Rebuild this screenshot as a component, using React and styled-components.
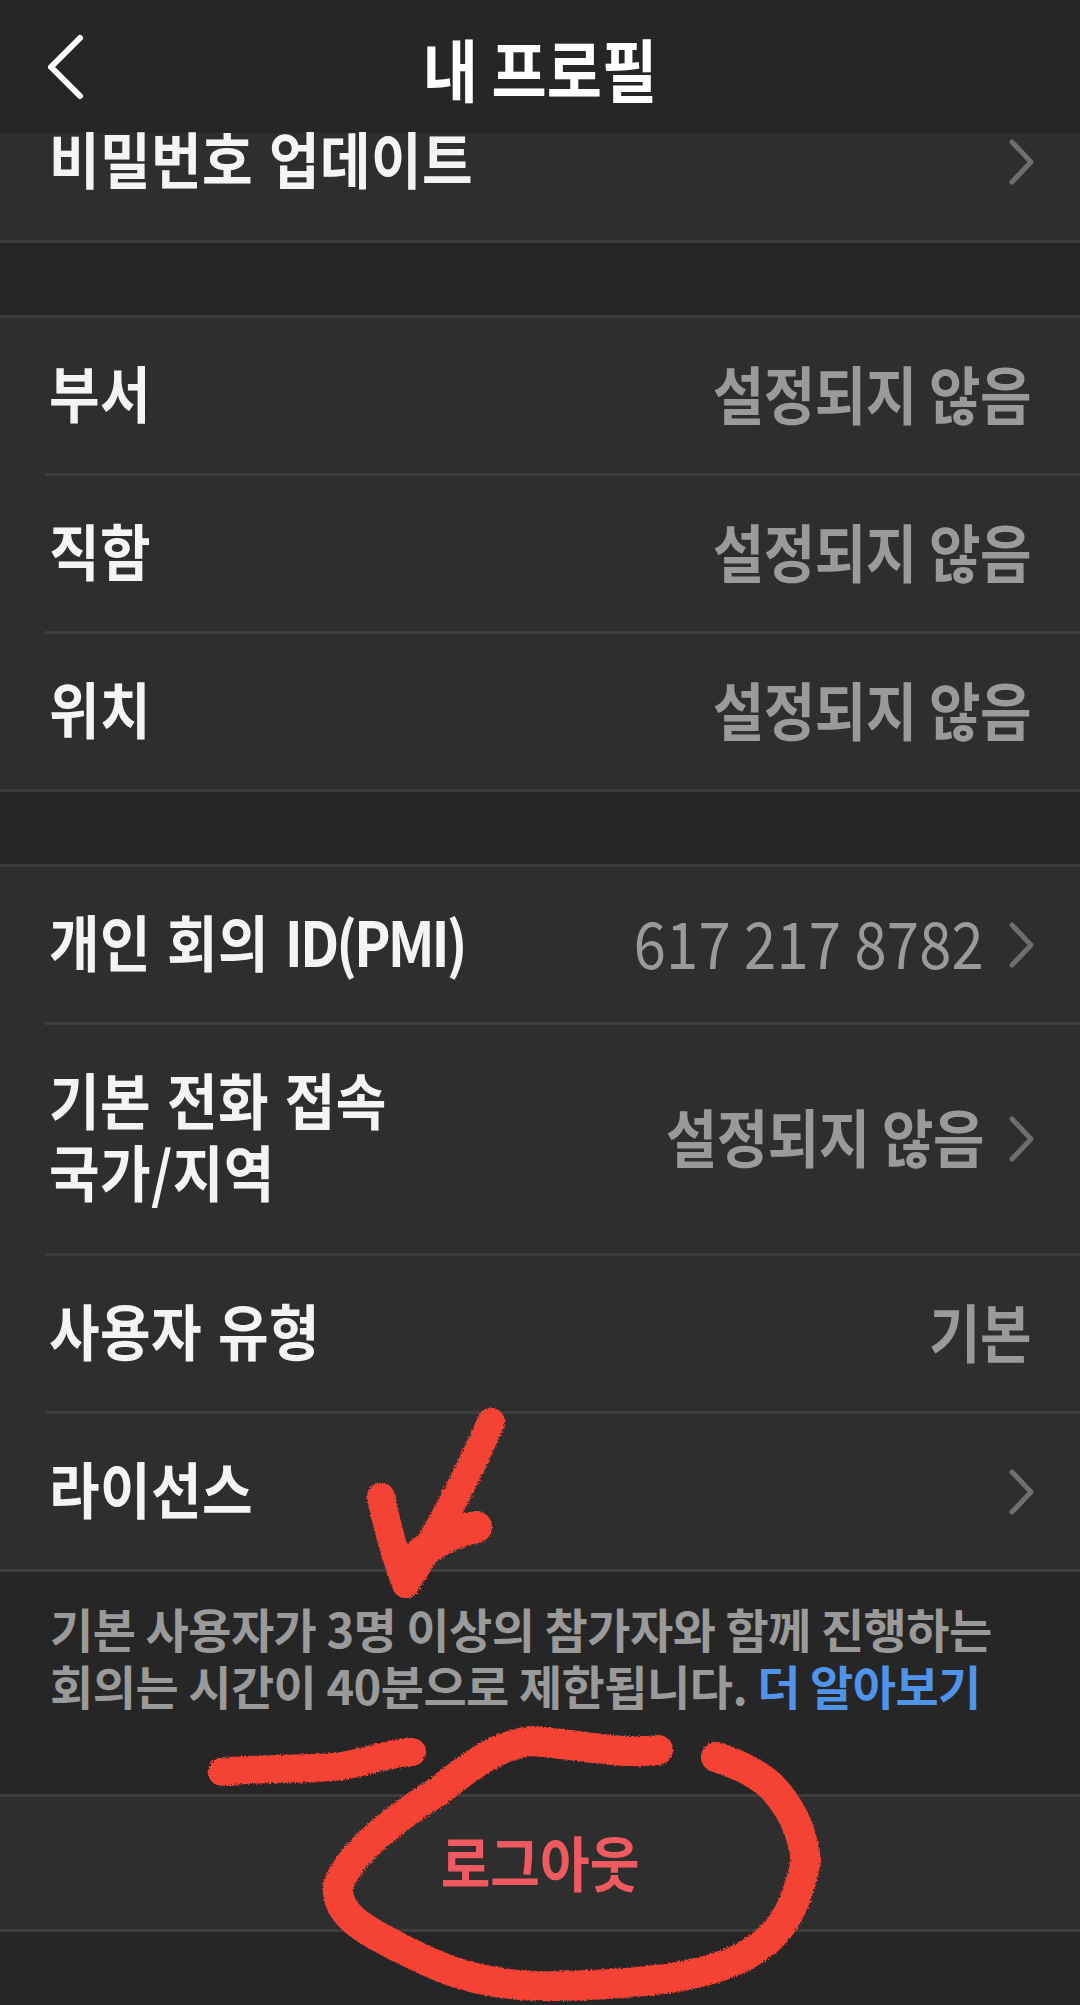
import styled, { createGlobalStyle } from 'styled-components';

const GlobalStyle = createGlobalStyle`
  html, body {
    margin: 0;
    padding: 0;
    background: #262626;
  }
  * {
    box-sizing: border-box;
  }
`;

const Page = styled.div`
  position: relative;
  width: 1080px;
  height: 2005px;
  overflow: hidden;
  background: #262626;
  font-family: 'Noto Sans CJK KR', 'Noto Sans', sans-serif;
`;

const Header = styled.header`
  position: relative;
  height: 133px;
  display: flex;
  align-items: center;
  justify-content: center;
  background: #262626;
`;

const BackIcon = styled.svg`
  position: absolute;
  left: 44px;
  top: 32px;
`;

const Title = styled.h1`
  margin: 0;
  font-size: 60px;
  font-weight: 700;
  line-height: 1;
  color: #fff;
  transform: scaleY(1.14);
`;

const Section = styled.section`
  background: #2e2e2e;
  border-top: ${props => (props.$cut ? 'none' : '3px solid #3d3d3d')};
  border-bottom: 3px solid #3d3d3d;
`;

const Gap = styled.div`
  height: 72px;
`;

const Row = styled.div`
  height: ${props => props.$height || 155}px;
  margin-left: 45px;
  padding: ${props => (props.$cut ? '0 46px 49px 4px' : '0 46px 0 4px')};
  display: flex;
  align-items: center;
  justify-content: space-between;
  & + & {
    box-sizing: content-box;
    border-top: 3px solid #3d3d3d;
  }
`;

const Label = styled.div`
  font-size: 55px;
  font-weight: 700;
  line-height: 64px;
  letter-spacing: 0.4px;
  word-spacing: 3px;
  color: #f4f4f4;
  white-space: pre-line;
  transform: translateY(-5px) scaleY(1.12);
  transform-origin: left center;
`;

const Latin = styled.span`
  letter-spacing: -3px;
`;

const Value = styled.div`
  display: flex;
  align-items: center;
  gap: 22px;
  font-size: 56px;
  font-weight: 700;
  line-height: 64px;
  letter-spacing: -0.5px;
  color: #9a9a9a;
`;

const ValueText = styled.span`
  display: inline-block;
  margin-right: ${props => (props.$plain ? 3 : 0)}px;
  transform: translateY(-4px) scaleY(1.12);
`;

const Digits = styled(ValueText)`
  font-size: 58px;
  font-weight: 400;
  letter-spacing: 0.2px;
`;

const Note = styled.p`
  height: 222px;
  margin: 0;
  padding: 27px 60px 0 50px;
  font-size: 47px;
  font-weight: 700;
  line-height: 57px;
  letter-spacing: -0.55px;
  color: #9a9a9a;
`;

const Link = styled.span`
  color: #4f94ea;
`;

const LogoutBar = styled.div`
  height: 138px;
  display: flex;
  align-items: center;
  justify-content: center;
  background: #2e2e2e;
  border-top: 3px solid #3d3d3d;
  border-bottom: 3px solid #3d3d3d;
`;

const Logout = styled.span`
  font-size: 54px;
  font-weight: 700;
  color: #ef5a60;
  transform: translateY(-3px) scaleY(1.12);
`;

const Scribble = styled.svg`
  position: absolute;
  left: 0;
  top: 0;
  pointer-events: none;
`;

function Chevron() {
  return (
    <svg width="28" height="46" viewBox="0 0 28 46" fill="none">
      <path d="M6 3 L25 23 L6 43" stroke="#6e6e6e" strokeWidth="5" strokeLinecap="round" strokeLinejoin="round" />
    </svg>
  );
}

const NOT_SET = '설정되지 않음';

function App() {
  return (
    <Page>
      <GlobalStyle />
      <Header>
        <BackIcon width="44" height="70" viewBox="0 0 44 70" fill="none">
          <path d="M36 6 L7 35 L36 64" stroke="#fff" strokeWidth="6" strokeLinecap="round" strokeLinejoin="round" />
        </BackIcon>
        <Title>내 프로필</Title>
      </Header>

      <Section $cut>
        <Row $cut $height={107}>
          <Label>비밀번호 업데이트</Label>
          <Chevron />
        </Row>
      </Section>
      <Gap />

      <Section>
        <Row>
          <Label>부서</Label>
          <Value><ValueText $plain>{NOT_SET}</ValueText></Value>
        </Row>
        <Row>
          <Label>직함</Label>
          <Value><ValueText $plain>{NOT_SET}</ValueText></Value>
        </Row>
        <Row>
          <Label>위치</Label>
          <Value><ValueText $plain>{NOT_SET}</ValueText></Value>
        </Row>
      </Section>
      <Gap />

      <Section>
        <Row>
          <Label>개인 회의 <Latin>ID(PMI)</Latin></Label>
          <Value><Digits>617 217 8782</Digits><Chevron /></Value>
        </Row>
        <Row $height={228}>
          <Label>{'기본 전화 접속\n국가/지역'}</Label>
          <Value><ValueText>{NOT_SET}</ValueText><Chevron /></Value>
        </Row>
        <Row>
          <Label>사용자 유형</Label>
          <Value><ValueText $plain>기본</ValueText></Value>
        </Row>
        <Row>
          <Label>라이선스</Label>
          <Chevron />
        </Row>
      </Section>

      <Note>
        기본 사용자가 3명 이상의 참가자와 함께 진행하는 회의는 시간이 40분으로 제한됩니다. <Link>더 알아보기</Link>
      </Note>

      <LogoutBar>
        <Logout>로그아웃</Logout>
      </LogoutBar>

      <Scribble width="1080" height="2005" viewBox="0 0 1080 2005" fill="none">
        <defs>
          <filter id="rough" x="-5%" y="-5%" width="110%" height="110%">
            <feTurbulence type="fractalNoise" baseFrequency="0.6" numOctaves="2" seed="3" />
            <feDisplacementMap in="SourceGraphic" scale="4" />
          </filter>
        </defs>
        <g stroke="#f44336" strokeLinecap="round" strokeLinejoin="round" filter="url(#rough)">
          <path strokeWidth="28" d="M491 1422 C470 1470 440 1530 406 1584" />
          <path strokeWidth="28" d="M381 1497 C388 1530 396 1560 406 1584" />
          <path strokeWidth="32" d="M476 1527 C450 1532 430 1545 410 1562" />
          <path strokeWidth="28" d="M222 1772 C270 1766 330 1772 360 1762 C385 1756 400 1752 412 1752" />
          <path
            strokeWidth="30"
            d="M658 1750 C620 1755 570 1743 530 1741 C500 1745 470 1765 440 1790 C400 1815 352 1850 338 1885 C335 1915 365 1930 400 1948 C440 1968 480 1988 560 1986 C640 1984 720 1978 760 1946 C790 1925 800 1890 806 1860 C802 1830 790 1805 770 1785 C750 1768 730 1762 716 1757"
          />
        </g>
      </Scribble>
    </Page>
  );
}

export default App;
